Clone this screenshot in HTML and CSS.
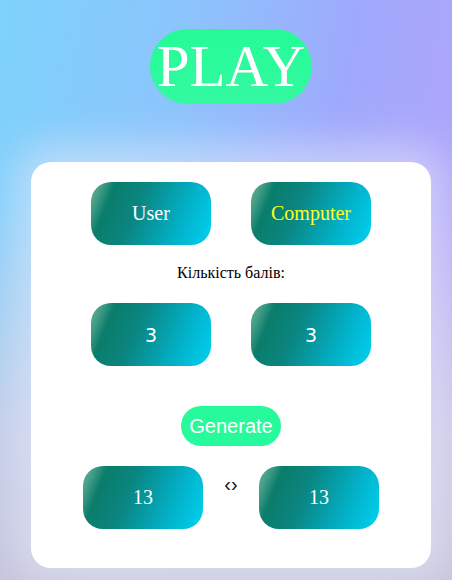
FILE: index.html
```html
<!DOCTYPE html>
<html lang="uk">
<head>
<meta charset="utf-8">
<title>Play</title>
<link rel="stylesheet" href="styles.css">
</head>
<body>
<div class="page">
  <div class="title-wrap"><h1 class="title">PLAY</h1></div>
  <div class="card">
    <div class="row">
      <div class="tile">User</div>
      <div class="tile tile-yellow">Computer</div>
    </div>
    <p class="label">Кількість балів:</p>
    <div class="row">
      <div class="tile tile-sans">3</div>
      <div class="tile tile-sans">3</div>
    </div>
    <div class="gen-wrap"><button class="generate">Generate</button></div>
    <div class="row row-result">
      <div class="tile">13</div>
      <span class="sep">‹›</span>
      <div class="tile">13</div>
    </div>
  </div>
</div>
</body>
</html>
```

FILE: styles.css
```css
html, body {
  margin: 0;
  padding: 0;
  height: 100%;
}
body {
  font-family: "Liberation Serif", "Times New Roman", serif;
  background:
    linear-gradient(180deg, rgba(200,200,225,0) 0%, rgba(200,200,225,0) 35%, rgba(205,205,228,0.85) 75%, rgba(196,196,220,1) 100%),
    linear-gradient(100deg, #7dd2fb 0%, #8cc4fc 35%, #9fa9fc 65%, #b6a3fa 100%);
  overflow: hidden;
}
.page {
  padding: 29px 21px 0 31px;
}
.title-wrap {
  display: flex;
  justify-content: center;
}
.title {
  margin: 0;
  height: 75px;
  line-height: 75px;
  padding: 0 7px;
  font-size: 59px;
  font-weight: normal;
  color: #fff;
  background: linear-gradient(180deg, #24fb97, #34f9a1);
  border-radius: 38px;
}
.card {
  margin-top: 58px;
  width: 400px;
  height: 406px;
  box-sizing: border-box;
  padding-top: 20px;
  background: #fff;
  border-radius: 20px;
  box-shadow: 0 0 40px 18px rgba(235, 235, 250, 0.55);
}
.row {
  display: flex;
  justify-content: center;
  gap: 40px;
}
.tile {
  width: 120px;
  height: 63px;
  border-radius: 20px;
  display: flex;
  align-items: center;
  justify-content: center;
  color: #fff;
  font-size: 20px;
  background: linear-gradient(112deg, #72b299 0%, #3f9b84 9%, #0a7d6b 17%, #0a8580 38%, #02b3cc 75%, #00d2f0 100%);
}
.tile-yellow {
  color: #ffff1a;
}
.tile-sans {
  font-family: "DejaVu Sans", Verdana, sans-serif;
  font-size: 19px;
}
.label {
  margin: 0;
  padding: 19px 0 21px;
  height: 18px;
  line-height: 18px;
  text-align: center;
  font-size: 16px;
  color: #000;
}
.gen-wrap {
  display: flex;
  justify-content: center;
  padding: 40px 0 20px;
}
.generate {
  width: 100px;
  height: 40px;
  border: none;
  border-radius: 20px;
  background: #27fa9a;
  color: #fff;
  font-family: "Liberation Sans", Arial, sans-serif;
  font-size: 20px;
  padding: 0;
}
.row-result {
  gap: 0;
  align-items: flex-start;
}
.sep {
  width: 56px;
  text-align: center;
  margin-top: 8px;
  font-family: "Liberation Sans", Arial, sans-serif;
  font-size: 20px;
  line-height: 20px;
  color: #111;
}
```
